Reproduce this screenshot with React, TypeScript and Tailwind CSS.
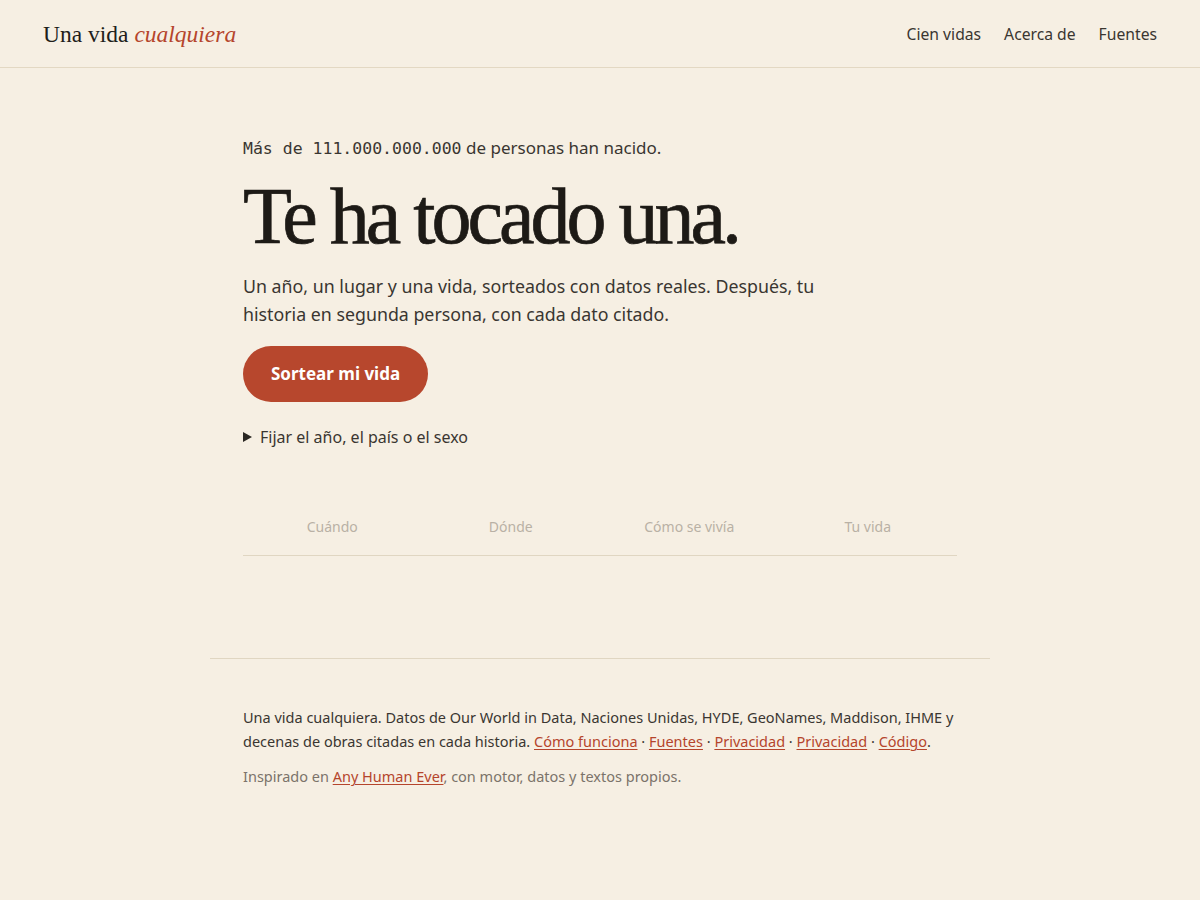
import React from 'react';

const serif = '"Liberation Serif", "DejaVu Serif", serif';
const sans = '"Noto Sans", "Open Sans", sans-serif';
const mono = '"DejaVu Sans Mono", "Liberation Mono", monospace';

const steps = ['Cuándo', 'Dónde', 'Cómo se vivía', 'Tu vida'];

function FooterLink({ children }: { children: React.ReactNode }) {
  return (
    <a href="#" className="text-[#b5452c] underline underline-offset-2 decoration-1">
      {children}
    </a>
  );
}

export default function App() {
  return (
    <div className="min-h-[900px] bg-[#f6efe3] text-[#3a3631]" style={{ fontFamily: sans }}>
      <header className="h-[68px] flex items-center justify-between px-[43px] pt-[2px] border-b border-[#e3d8c3]">
        <a href="#" className="text-[23.5px] text-[#211e1a]" style={{ fontFamily: serif }}>
          Una vida <em className="text-[#b5452c]">cualquiera</em>
        </a>
        <nav className="flex gap-[23px] text-[15.7px] text-[#3a3631]">
          <a href="#">Cien vidas</a>
          <a href="#">Acerca de</a>
          <a href="#">Fuentes</a>
        </nav>
      </header>

      <main className="max-w-[780px] mx-auto px-[33px]">
        <section className="pt-[67px]">
          <p className="text-[17px] leading-[26px]">
            <span className="text-[16.5px]" style={{ fontFamily: mono }}>Más de 111.000.000.000</span> de personas han nacido.
          </p>
          <h1
            className="mt-[14px] text-[80px] leading-[80px] tracking-[-4px] text-[#1d1a16] [-webkit-text-stroke:0.7px_#1d1a16]"
            style={{ fontFamily: serif }}
          >
            Te ha tocado una.
          </h1>
          <p className="mt-[16px] text-[17.8px] leading-[28px] max-w-[590px]">
            Un año, un lugar y una vida, sorteados con datos reales. Después, tu historia en segunda persona, con cada dato citado.
          </p>
          <button className="mt-[18px] h-[56px] px-[28px] rounded-full bg-[#b7472d] text-white text-[17px] font-bold">
            Sortear mi vida
          </button>
          <div className="mt-[22px] flex items-center gap-[8px] text-[16px] leading-[26px]">
            <svg width="9" height="10" viewBox="0 0 9 10" className="shrink-0">
              <path d="M0 0 L9 5 L0 10 Z" fill="#2a2723" />
            </svg>
            <span>Fijar el año, el país o el sexo</span>
          </div>
        </section>

        <div className="mt-[66px] grid grid-cols-4 border-b border-[#e0d6c2] pb-[17px] text-[14px] leading-[22px] text-[#b9b1a5]">
          {steps.map((s) => (
            <div key={s} className="text-center">
              {s}
            </div>
          ))}
        </div>
      </main>

      <footer className="max-w-[780px] mx-auto mt-[102px] border-t border-[#e0d6c2] px-[33px] pt-[46px] text-[14.5px] leading-[24px]">
        <p>
          Una vida cualquiera. Datos de Our World in Data, Naciones Unidas, HYDE, GeoNames, Maddison, IHME y decenas de obras citadas en cada historia.{' '}
          <FooterLink>Cómo funciona</FooterLink> · <FooterLink>Fuentes</FooterLink> · <FooterLink>Privacidad</FooterLink> ·{' '}
          <FooterLink>Privacidad</FooterLink> · <FooterLink>Código</FooterLink>.
        </p>
        <p className="mt-[11px] text-[#7b736a]">
          Inspirado en <FooterLink>Any Human Ever</FooterLink>, con motor, datos y textos propios.
        </p>
      </footer>
    </div>
  );
}
